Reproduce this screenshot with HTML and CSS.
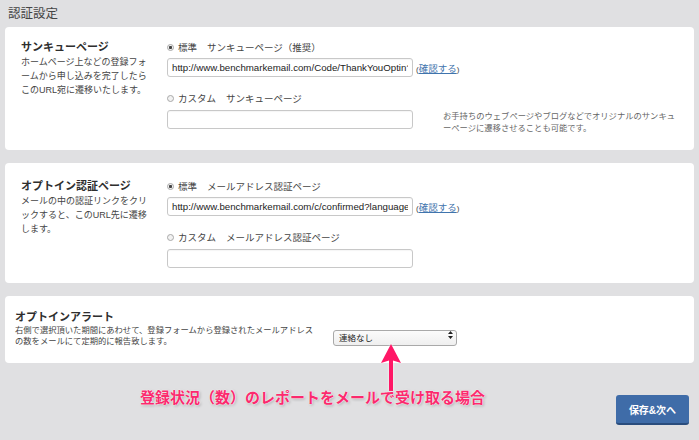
FILE: index.html
```html
<!DOCTYPE html>
<html lang="ja">
<head>
<meta charset="utf-8">
<title>認証設定</title>
<link rel="stylesheet" href="styles.css">
</head>
<body>
<div class="page">
  <h1 class="page-title">認証設定</h1>

  <div class="cards">
    <section class="card card-thanks">
      <div class="info">
        <h2 class="info-title">サンキューページ</h2>
        <p class="info-desc">ホームページ上などの登録フォ<br>ームから申し込みを完了したら<br>このURL宛に遷移いたします。</p>
      </div>
      <div class="options">
        <div class="radio-row"><span class="radio checked"></span><span class="radio-name">標準</span><span>サンキューページ（推奨）</span></div>
        <div class="field-row url">
          <input class="text-input" type="text" value="http://www.benchmarkemail.com/Code/ThankYouOptin?language=japanese" readonly>
          <span class="confirm">(<a href="#">確認する</a>)</span>
        </div>
        <div class="radio-row second"><span class="radio"></span><span class="radio-name">カスタム</span><span>サンキューページ</span></div>
        <div class="field-row custom">
          <input class="text-input" type="text" value="">
          <p class="note">お手持ちのウェブページやブログなどでオリジナルのサンキュ<br>ーページに遷移させることも可能です。</p>
        </div>
      </div>
    </section>

    <section class="card card-confirm">
      <div class="info">
        <h2 class="info-title">オプトイン認証ページ</h2>
        <p class="info-desc">メールの中の認証リンクをクリ<br>ックすると、このURL先に遷移<br>します。</p>
      </div>
      <div class="options">
        <div class="radio-row"><span class="radio checked"></span><span class="radio-name">標準</span><span>メールアドレス認証ページ</span></div>
        <div class="field-row url">
          <input class="text-input" type="text" value="http://www.benchmarkemail.com/c/confirmed?language=japanese" readonly>
          <span class="confirm">(<a href="#">確認する</a>)</span>
        </div>
        <div class="radio-row second"><span class="radio"></span><span class="radio-name">カスタム</span><span>メールアドレス認証ページ</span></div>
        <div class="field-row custom">
          <input class="text-input" type="text" value="">
        </div>
      </div>
    </section>

    <section class="card card-alert">
      <div class="info-wide">
        <h2 class="info-title">オプトインアラート</h2>
        <p class="alert-desc">右側で選択頂いた期間にあわせて、登録フォームから登録されたメールアドレス<br>の数をメールにて定期的に報告致します。</p>
      </div>
      <div class="select">
        <select class="select-box">
          <option>連絡なし</option>
          <option>毎日</option>
          <option>毎週</option>
          <option>毎月</option>
        </select>
        <svg class="select-arrows" width="5" height="8" viewBox="0 0 5 8"><path d="M2.5 0 L5 3 L0 3 Z M2.5 8 L5 5 L0 5 Z" fill="#222"/></svg>
      </div>
    </section>
  </div>

  <div class="footer">
    <button class="btn-next" type="button">保存&amp;次へ</button>
  </div>

  <svg class="annot-arrow" width="20" height="48" viewBox="0 0 20 48">
    <path d="M10 0 L20 19 L12 16.5 L12 47 L8 47 L8 16.5 L0 19 Z" fill="#ff1766"/>
  </svg>
  <p class="annot-text">登録状況（数）のレポートをメールで受け取る場合</p>
</div>
</body>
</html>
```

FILE: styles.css
```css
* { box-sizing: border-box; }

html, body {
  margin: 0;
  padding: 0;
}

body {
  background: #e0e0e2;
  font-family: "Liberation Sans", "Noto Sans CJK JP", sans-serif;
  color: #333;
  width: 699px;
  height: 440px;
  overflow: hidden;
}

.page {
  position: relative;
  height: 440px;
  padding: 0 5px;
}

.page-title {
  margin: 0;
  height: 27px;
  padding: 6px 3px 0;
  font-size: 12.5px;
  line-height: 16px;
  font-weight: normal;
  color: #444;
}

.cards {
  display: flex;
  flex-direction: column;
  gap: 13px;
}

.card {
  display: flex;
  background: #fff;
  border-radius: 4px;
}

.card-thanks { padding: 13px 16px 16px; }
.card-confirm { padding: 16px 16px 15px; }
.card-alert { padding: 14px 10px 16px; }

.info {
  flex: none;
  width: 146px;
}

.info-title {
  margin: 0;
  font-size: 11px;
  line-height: 15px;
  font-weight: bold;
  color: #2e2e2e;
}

.info-desc {
  margin: 0;
  font-size: 9px;
  line-height: 14px;
  color: #444;
  white-space: nowrap;
}

.options {
  flex: 1;
}

.radio-row {
  display: flex;
  align-items: center;
  height: 14px;
  font-size: 9.5px;
  color: #444;
  white-space: nowrap;
}

.radio-row.second { margin-top: 14px; }

.radio {
  flex: none;
  width: 7px;
  height: 7px;
  margin-right: 4px;
  border: 1px solid #a8a8a8;
  border-radius: 50%;
  background: #f2f2f2;
}

.radio.checked {
  background: radial-gradient(circle at center, #444 0, #444 1.3px, #f2f2f2 1.9px);
}

.radio-name { margin-right: 10px; }

.field-row {
  display: flex;
  align-items: center;
}

.field-row.url { margin-top: 4px; }
.field-row.custom { margin-top: 5px; align-items: flex-start; }

.text-input {
  flex: none;
  width: 246px;
  height: 19px;
  margin: 0;
  padding: 0 4px;
  border: 1px solid #c8c8c8;
  border-radius: 3px;
  background: #fff;
  box-shadow: inset 0 1px 1px rgba(0, 0, 0, 0.04);
  font-family: "Liberation Sans", "Noto Sans CJK JP", sans-serif;
  font-size: 9.7px;
  color: #222;
  outline: none;
}

.confirm {
  margin-left: 3px;
  font-size: 8px;
  color: #444;
}

.confirm a {
  font-size: 9.5px;
  color: #3f74ad;
  text-decoration: underline;
}

.note {
  margin: 0 0 0 30px;
  font-size: 8.3px;
  line-height: 12px;
  color: #666;
  white-space: nowrap;
}

.info-wide {
  flex: none;
  width: 318px;
}

.alert-desc {
  margin: 0;
  font-size: 8.3px;
  line-height: 11px;
  color: #444;
  white-space: nowrap;
}

.select {
  position: relative;
  flex: none;
  width: 124px;
  height: 16px;
  margin-top: 17px;
}

.select-box {
  appearance: none;
  -webkit-appearance: none;
  width: 100%;
  height: 100%;
  margin: 0;
  padding: 0 0 0 5px;
  border: 1px solid #a9a9a9;
  border-radius: 3px;
  background: linear-gradient(#fbfbfb, #efefef);
  font-family: "Liberation Sans", "Noto Sans CJK JP", sans-serif;
  font-size: 8.5px;
  color: #222;
  outline: none;
}

.select-arrows {
  position: absolute;
  right: 4px;
  top: 4px;
  pointer-events: none;
}

.footer {
  display: flex;
  justify-content: flex-end;
  padding: 32px 5px 0 0;
}

.btn-next {
  width: 73px;
  height: 30px;
  margin: 0;
  padding: 0;
  border: none;
  border-bottom: 2px solid #2a4d7d;
  border-radius: 3px;
  background: #3f6ca8;
  font-family: "Liberation Sans", "Noto Sans CJK JP", sans-serif;
  font-size: 10px;
  font-weight: bold;
  color: #fff;
}

.annot-arrow {
  position: absolute;
  left: 381px;
  top: 344px;
  filter: drop-shadow(0 0 1px rgba(255, 255, 255, 0.9));
}

.annot-text {
  position: absolute;
  left: 140px;
  top: 388px;
  margin: 0;
  font-size: 15px;
  line-height: 20px;
  font-weight: bold;
  color: #fb2a6e;
  white-space: nowrap;
  text-shadow: 0 0 1px #fff, 0 0 2px #fff, 1px 1px 3px rgba(0, 0, 0, 0.3);
}
```
